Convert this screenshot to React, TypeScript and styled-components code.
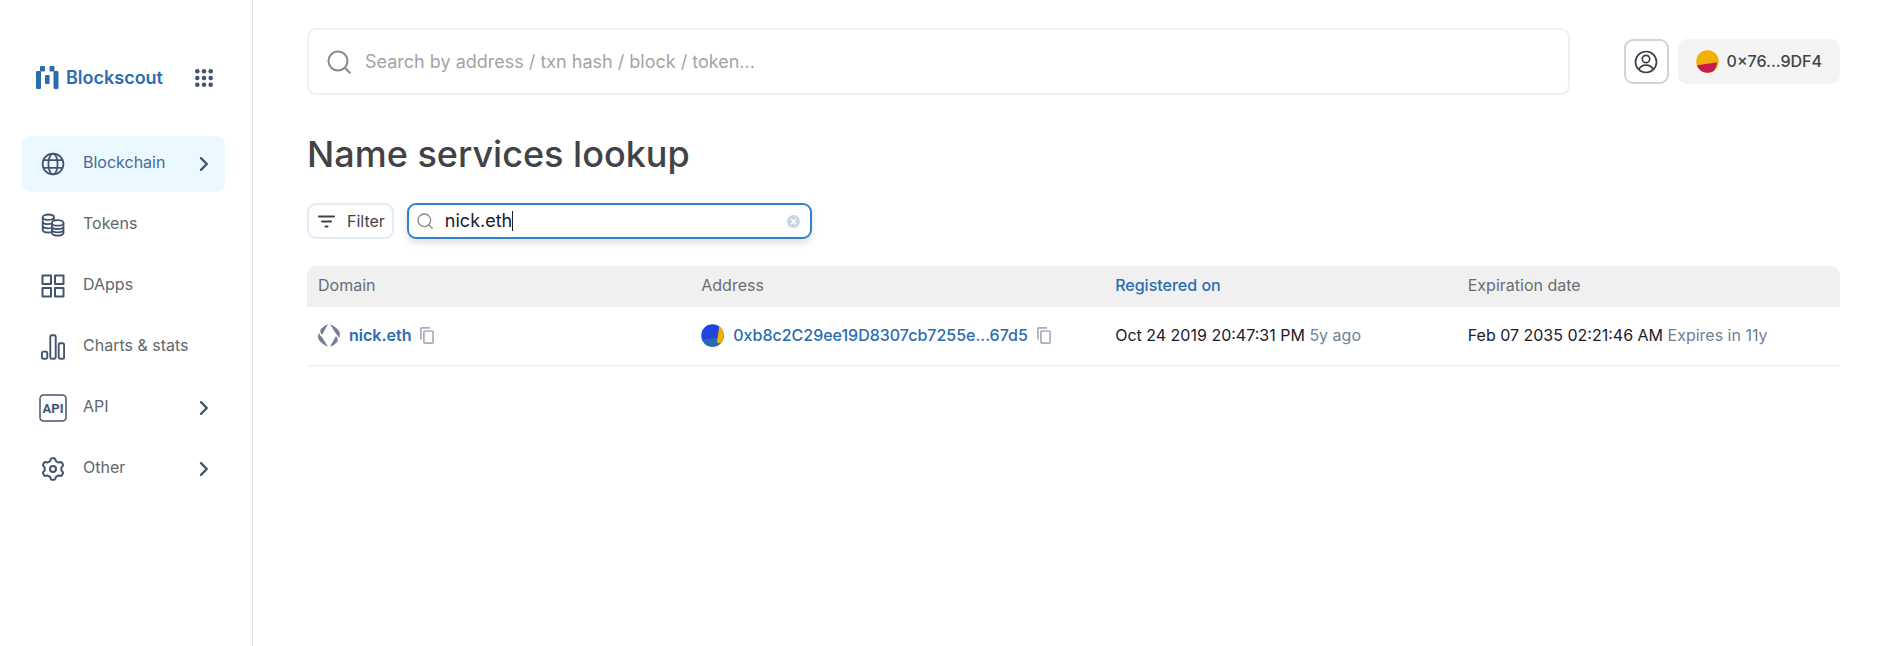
import React, { useState } from "react";
import styled, { createGlobalStyle } from "styled-components";

const color = {
  blue: "#2b6cb0",
  focus: "#3182ce",
  icon: "#44546f",
  nav: "#62666d",
  navActive: "#476a94",
  muted: "#718096",
  text: "#1a202c",
  line: "#ececed",
};

const GlobalStyle = createGlobalStyle`
  *, *::before, *::after { box-sizing: border-box; }
  body {
    margin: 0;
    background: #fff;
    color: ${color.text};
    font-family: Inter, "Liberation Sans", sans-serif;
    font-size: 16px;
    line-height: 24px;
  }
  button, input { font: inherit; color: inherit; }
  button { cursor: pointer; }
  svg { display: block; flex: none; }
`;

const Page = styled.div`
  display: flex;
  min-height: 100vh;
`;

const Sidebar = styled.aside`
  flex: none;
  width: 253px;
  padding: 65px 27px 24px 22px;
  border-right: 1px solid #e4e4e6;
`;

const Brand = styled.div`
  display: flex;
  align-items: center;
  justify-content: space-between;
  height: 25px;
  padding: 0 12px 0 14px;
`;

const LogoLink = styled.a`
  display: flex;
  align-items: center;
  gap: 7px;
  color: ${color.blue};
  font-size: 18px;
  font-weight: 600;
  text-decoration: none;
`;

const PlainButton = styled.button`
  display: flex;
  align-items: center;
  padding: 0;
  border: 0;
  background: none;
`;

const NavList = styled.ul`
  display: grid;
  gap: 5px;
  margin: 46px 0 0;
  padding: 0;
  list-style: none;
`;

const NavLink = styled.a<{ $active?: boolean }>`
  display: flex;
  align-items: center;
  gap: 11px;
  height: 56px;
  padding: 0 16px 0 15px;
  border-radius: 9px;
  background: ${(p) => (p.$active ? "#ebf8ff" : "transparent")};
  color: ${(p) => (p.$active ? color.navActive : color.nav)};
  text-decoration: none;
`;

const NavIcon = styled.span`
  display: flex;
  justify-content: center;
  flex: none;
  width: 32px;
  color: ${color.icon};
`;

const NavLabel = styled.span`
  flex: 1;
  padding: 0 0 4px 3px;
`;

const Main = styled.main`
  flex: 1;
  min-width: 0;
  padding: 28px 38px 40px 54px;
`;

const TopBar = styled.header`
  display: flex;
  align-items: center;
  gap: 54px;
`;

const SearchBox = styled.label`
  display: flex;
  align-items: center;
  flex: 1;
  gap: 14px;
  height: 67px;
  padding: 0 18px;
  border: 2px solid #f0f0f1;
  border-radius: 9px;
  color: #87898f;
`;

const SearchInput = styled.input`
  flex: 1;
  min-width: 0;
  padding: 0;
  border: 0;
  outline: 0;
  background: none;
  font-size: 18px;
  &::placeholder { color: #a2a4a9; opacity: 1; }
`;

const Account = styled.div`
  display: flex;
  gap: 9px;
`;

const ProfileButton = styled.button`
  display: grid;
  place-items: center;
  width: 45px;
  height: 45px;
  padding: 0;
  border: 2px solid #cbd5e0;
  border-radius: 9px;
  background: #fff;
  color: #3b3f47;
`;

const WalletButton = styled.button`
  display: flex;
  align-items: center;
  gap: 8px;
  height: 45px;
  padding: 0 18px;
  border: 0;
  border-radius: 9px;
  background: #f4f4f4;
  color: #414449;
  font-weight: 500;
`;

const WalletLabel = styled.span`
  padding-bottom: 2px;
`;

const Title = styled.h1`
  margin: 35px 0 25px;
  color: #414346;
  font-size: 36px;
  font-weight: 500;
  line-height: 48px;
`;

const Tools = styled.div`
  display: flex;
  gap: 13px;
  margin-bottom: 27px;
`;

const FilterButton = styled.button`
  display: flex;
  align-items: center;
  gap: 12px;
  height: 36px;
  padding: 0 7px 0 9px;
  border: 2px solid #e2ebf5;
  border-radius: 9px;
  background: #fff;
  color: #3f4349;
`;

const NameField = styled.div`
  display: flex;
  align-items: center;
  width: 405px;
  height: 36px;
  padding: 0 10px 0 8px;
  border: 2px solid ${color.focus};
  border-radius: 9px;
  box-shadow: 0 4px 6px rgba(0, 0, 0, 0.12);
`;

const FieldLabel = styled.label`
  padding-right: 12px;
  color: #87898f;
`;

const NameInput = styled.input`
  field-sizing: content;
  max-width: 300px;
  padding: 0;
  border: 0;
  outline: 0;
  background: none;
  font-size: 18px;
  caret-color: transparent;
`;

const Caret = styled.span`
  width: 1px;
  height: 20px;
  background: ${color.text};
`;

const ClearButton = styled(PlainButton)`
  margin-left: auto;
`;

const Table = styled.table`
  width: 100%;
  table-layout: fixed;
  border-collapse: separate;
  border-spacing: 0;
`;

const HeadCell = styled.th<{ $width: string; $sorted?: boolean }>`
  width: ${(p) => p.$width};
  height: 41px;
  padding: 0 11px 4px;
  background: #f0f0f0;
  color: ${(p) => (p.$sorted ? color.blue : "#6a6d74")};
  font-weight: ${(p) => (p.$sorted ? 500 : 400)};
  text-align: left;
  &:first-child { border-top-left-radius: 9px; }
  &:last-child { border-top-right-radius: 9px; }
`;

const SortLink = styled.a`
  color: inherit;
  text-decoration: none;
`;

const Cell = styled.td`
  height: 59px;
  padding: 0 11px 2px;
  border-bottom: 1px solid ${color.line};
  white-space: nowrap;
`;

const Entity = styled.div`
  display: flex;
  align-items: center;
  gap: 9px;
`;

const EntityLink = styled.a<{ $bold?: boolean }>`
  color: ${color.blue};
  font-weight: ${(p) => (p.$bold ? 600 : 500)};
  text-decoration: none;
`;

const Ago = styled.span`
  color: ${color.muted};
`;

const LogoMark = () => (
  <svg width="23" height="24" viewBox="0 0 23 24" fill="currentColor" aria-hidden="true">
    <rect x="0" y="5" width="5" height="18" rx="1" />
    <rect x="4" y="0" width="5" height="5.5" rx="1" />
    <rect x="13.5" y="0" width="5" height="5.5" rx="1" />
    <rect x="17.5" y="5" width="5" height="18" rx="1" />
    <rect x="9" y="9" width="4.6" height="9" rx="1" />
  </svg>
);

const AppsGrid = () => (
  <svg width="18" height="18" viewBox="0 0 18 18" fill={color.icon} aria-hidden="true">
    {[2.3, 9, 15.7].map((y) => [2.3, 9, 15.7].map((x) => <circle key={`${x}-${y}`} cx={x} cy={y} r="2.3" />))}
  </svg>
);

const Globe = () => (
  <svg width="24" height="24" viewBox="0 0 24 24" fill="none" stroke="currentColor" strokeWidth="1.8" aria-hidden="true">
    <circle cx="12" cy="12" r="10.4" />
    <ellipse cx="12" cy="12" rx="4.6" ry="10.4" />
    <path d="M2.4 8.2h19.2M2.4 15.8h19.2" />
  </svg>
);

const Coins = () => (
  <svg width="24" height="24" viewBox="0 0 24 24" fill="none" stroke="currentColor" strokeWidth="1.8" aria-hidden="true">
    <ellipse cx="7.3" cy="4.2" rx="5.6" ry="2.7" />
    <path d="M1.7 4.2v12.6c0 1.5 2.5 2.7 5.6 2.7 1 0 1.9-.1 2.7-.4M12.9 4.2v2.9M1.7 8.4c0 1.5 2.5 2.7 5.6 2.7 1.1 0 2.1-.1 3-.4M1.7 12.6c0 1.5 2.5 2.7 5.6 2.7.9 0 1.8-.1 2.6-.3" />
    <ellipse cx="16.7" cy="9.9" rx="5.8" ry="2.8" />
    <path d="M10.9 9.9v10c0 1.5 2.6 2.8 5.8 2.8s5.8-1.3 5.8-2.8v-10M10.9 13.2c0 1.6 2.6 2.8 5.8 2.8s5.8-1.2 5.8-2.8M10.9 16.5c0 1.6 2.6 2.8 5.8 2.8s5.8-1.2 5.8-2.8" />
  </svg>
);

const Squares = () => (
  <svg width="24" height="24" viewBox="0 0 24 24" fill="none" stroke="currentColor" strokeWidth="2" strokeLinejoin="round" aria-hidden="true">
    <rect x="1.5" y="1.5" width="8.5" height="8.5" />
    <rect x="14" y="1.5" width="8.5" height="8.5" />
    <rect x="1.5" y="14" width="8.5" height="8.5" />
    <rect x="14" y="14" width="8.5" height="8.5" />
  </svg>
);

const Bars = () => (
  <svg width="24" height="26" viewBox="0 0 24 26" fill="none" stroke="currentColor" strokeWidth="1.9" aria-hidden="true">
    <rect x="0.9" y="17.6" width="5.4" height="7.2" rx="1.5" />
    <rect x="9.3" y="1.2" width="5.4" height="23.6" rx="1.5" />
    <rect x="17.7" y="9.2" width="5.4" height="15.6" rx="1.5" />
  </svg>
);

const ApiIcon = () => (
  <svg width="28" height="28" viewBox="0 0 28 28" fill="none" aria-hidden="true">
    <rect x="1" y="1" width="26" height="26" rx="3.5" stroke="currentColor" strokeWidth="1.5" />
    <text x="14" y="19" textAnchor="middle" fill="currentColor" fontFamily="Roboto, sans-serif" fontSize="13" fontWeight="700">API</text>
  </svg>
);

// Six-lobed outline, flattened at the crest and the root of each lobe.
const gearPoints = Array.from({ length: 120 }, (_, i) => {
  const angle = (i / 120) * Math.PI * 2;
  const r = 9.6 + 1.3 * Math.tanh(2.2 * Math.cos(6 * angle));
  return `${(12 + r * Math.sin(angle)).toFixed(2)},${(12 - r * Math.cos(angle)).toFixed(2)}`;
}).join(" ");

const Gear = () => (
  <svg width="24" height="24" viewBox="0 0 24 24" fill="none" stroke="currentColor" strokeWidth="2" strokeLinejoin="round" aria-hidden="true">
    <polygon points={gearPoints} />
    <circle cx="12" cy="12" r="3" />
  </svg>
);

const Chevron = () => (
  <svg width="10" height="16" viewBox="0 0 10 16" fill="none" stroke={color.icon} strokeWidth="2.4" strokeLinecap="round" strokeLinejoin="round" aria-hidden="true">
    <path d="M2 2.2L7.8 8L2 13.8" />
  </svg>
);

const SearchIcon = ({ size, stroke }: { size: number; stroke: number }) => (
  <svg width={size} height={size} viewBox="0 0 24 24" fill="none" stroke="currentColor" strokeWidth={stroke} strokeLinecap="round" aria-hidden="true">
    <circle cx="11" cy="11" r="9.5" />
    <path d="M18 18l4.8 4.8" />
  </svg>
);

const UserIcon = () => (
  <svg width="24" height="24" viewBox="0 0 24 24" fill="none" stroke="currentColor" strokeWidth="1.7" aria-hidden="true">
    <circle cx="12" cy="12" r="10.5" />
    <circle cx="12" cy="9" r="3.7" />
    <path d="M4.8 19.5c1.3-2.8 3.9-4.3 7.2-4.3s5.9 1.5 7.2 4.3" />
  </svg>
);

const WalletAvatar = () => (
  <svg width="23" height="23" viewBox="0 0 23 23" aria-hidden="true">
    <clipPath id="wallet-circle"><circle cx="11.5" cy="11.5" r="11.2" /></clipPath>
    <g clipPath="url(#wallet-circle)">
      <path fill="#f3b000" d="M0 0h23v23H0z" />
      <path fill="#c7194f" d="M0 15.5L21 12.3Q20.5 18 16.5 23H0z" />
    </g>
  </svg>
);

const AddressAvatar = () => (
  <svg width="23" height="23" viewBox="0 0 23 23" aria-hidden="true">
    <clipPath id="address-circle"><circle cx="11.5" cy="11.5" r="11.2" /></clipPath>
    <g clipPath="url(#address-circle)">
      <path fill="#2343e0" d="M0 0h23v23H0z" />
      <path fill="#2a69b0" d="M0 15.5L23 13v10H0z" />
      <path fill="#f3b000" d="M18.5 0L16 18.5L23 20V0z" />
    </g>
  </svg>
);

const EnsIcon = () => (
  <svg width="22" height="23" viewBox="0 0 22 23" fill="#718096" aria-hidden="true">
    <path d="M10 .2L4 11Q1.200 8 2.900 5Q5.200 1.900 10 .2ZM1 8.500Q1.400 11.500 4.200 13.600L10 22.800Q3.200 19.800 1 16Q-.8 12.500 1 8.500Z" />
    <path d="M12 22.800L18 12Q20.800 15 19.100 18Q16.800 21.100 12 22.800ZM21 14.500Q20.600 11.500 17.800 9.400L12 .2Q18.800 3.200 21 7Q22.800 10.500 21 14.500Z" />
  </svg>
);

const CopyIcon = () => (
  <svg width="14" height="17" viewBox="0 0 14 17" fill="none" stroke="#a5afbd" strokeWidth="1.7" aria-hidden="true">
    <path d="M.9 12.5V1.9q0-1 1-1H10" />
    <rect x="3.9" y="4" width="9.2" height="12.1" rx="1" />
  </svg>
);

const FilterIcon = () => (
  <svg width="17" height="13" viewBox="0 0 17 13" fill="none" stroke="#3f4349" strokeWidth="2" strokeLinecap="round" aria-hidden="true">
    <path d="M1 1.5h15M4 6.5h9M7.5 11.5h2" />
  </svg>
);

const ClearIcon = () => (
  <svg width="13" height="13" viewBox="0 0 13 13" aria-hidden="true">
    <circle cx="6.5" cy="6.5" r="6.5" fill="#cbd5e0" />
    <path d="M4.3 4.3l4.4 4.4M8.7 4.3l-4.4 4.4" stroke="#fff" strokeWidth="1.6" strokeLinecap="round" />
  </svg>
);

const navItems = [
  { label: "Blockchain", icon: <Globe />, more: true, active: true },
  { label: "Tokens", icon: <Coins /> },
  { label: "DApps", icon: <Squares /> },
  { label: "Charts & stats", icon: <Bars /> },
  { label: "API", icon: <ApiIcon />, more: true },
  { label: "Other", icon: <Gear />, more: true },
];

export default function App() {
  const [name, setName] = useState("nick.eth");

  return (
    <>
      <GlobalStyle />
      <Page>
        <Sidebar>
          <Brand>
            <LogoLink href="#">
              <LogoMark />
              Blockscout
            </LogoLink>
            <PlainButton type="button" aria-label="Featured networks">
              <AppsGrid />
            </PlainButton>
          </Brand>
          <nav>
            <NavList>
              {navItems.map((item) => (
                <li key={item.label}>
                  <NavLink href="#" $active={item.active}>
                    <NavIcon>{item.icon}</NavIcon>
                    <NavLabel>{item.label}</NavLabel>
                    {item.more && <Chevron />}
                  </NavLink>
                </li>
              ))}
            </NavList>
          </nav>
        </Sidebar>
        <Main>
          <TopBar>
            <SearchBox>
              <SearchIcon size={24} stroke={2} />
              <SearchInput type="text" aria-label="Search" placeholder="Search by address / txn hash / block / token..." />
            </SearchBox>
            <Account>
              <ProfileButton type="button" aria-label="Profile">
                <UserIcon />
              </ProfileButton>
              <WalletButton type="button">
                <WalletAvatar />
                <WalletLabel>0×76...9DF4</WalletLabel>
              </WalletButton>
            </Account>
          </TopBar>
          <Title>Name services lookup</Title>
          <Tools>
            <FilterButton type="button">
              <FilterIcon />
              Filter
            </FilterButton>
            <NameField>
              <FieldLabel htmlFor="name-search" aria-label="Search by name">
                <SearchIcon size={16} stroke={2} />
              </FieldLabel>
              <NameInput id="name-search" type="text" value={name} onChange={(e) => setName(e.target.value)} />
              <Caret />
              <ClearButton type="button" aria-label="Clear" onClick={() => setName("")}>
                <ClearIcon />
              </ClearButton>
            </NameField>
          </Tools>
          <Table>
            <thead>
              <tr>
                <HeadCell $width="25%">Domain</HeadCell>
                <HeadCell $width="27%">Address</HeadCell>
                <HeadCell $width="23%" $sorted>
                  <SortLink href="#">Registered on</SortLink>
                </HeadCell>
                <HeadCell $width="25%">Expiration date</HeadCell>
              </tr>
            </thead>
            <tbody>
              <tr>
                <Cell>
                  <Entity>
                    <EnsIcon />
                    <EntityLink href="#" $bold>nick.eth</EntityLink>
                    <PlainButton type="button" aria-label="Copy domain"><CopyIcon /></PlainButton>
                  </Entity>
                </Cell>
                <Cell>
                  <Entity>
                    <AddressAvatar />
                    <EntityLink href="#">0xb8c2C29ee19D8307cb7255e...67d5</EntityLink>
                    <PlainButton type="button" aria-label="Copy address"><CopyIcon /></PlainButton>
                  </Entity>
                </Cell>
                <Cell>Oct 24 2019 20:47:31 PM <Ago>5y ago</Ago></Cell>
                <Cell>Feb 07 2035 02:21:46 AM <Ago>Expires in 11y</Ago></Cell>
              </tr>
            </tbody>
          </Table>
        </Main>
      </Page>
    </>
  );
}
